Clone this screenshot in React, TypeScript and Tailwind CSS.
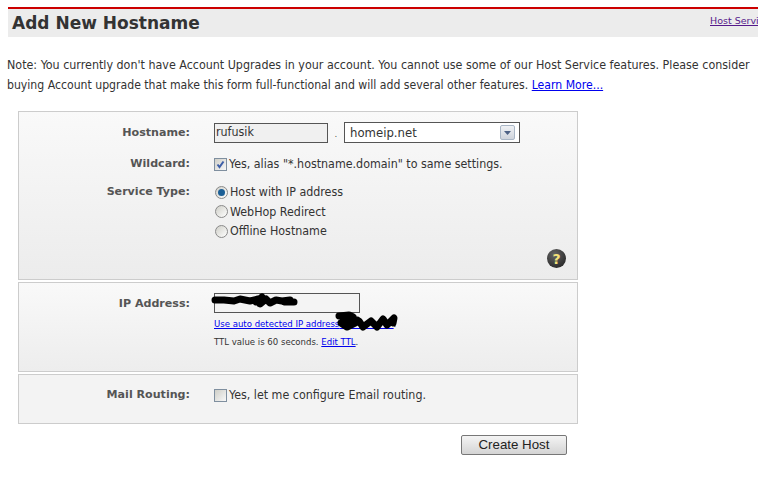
import React from 'react';

const FONT = "font-['DejaVu_Sans_Condensed','DejaVu_Sans',sans-serif]";

function Label({ children }: { children: React.ReactNode }) {
  return <div className="w-[171px] shrink-0 text-right font-['DejaVu_Sans',sans-serif] text-[11.1px] font-bold leading-[16px] text-[#555555]">{children}</div>;
}

function Radio({ checked }: { checked?: boolean }) {
  return (
    <span className="mr-[2px] flex h-[13px] w-[13px] shrink-0 items-center justify-center rounded-full border border-[#8a8a8a] bg-gradient-to-br from-[#cfcfc8] to-[#ffffff]">
      {checked && <span className="h-[7px] w-[7px] rounded-full bg-[#1c5f96]" />}
    </span>
  );
}

function Check({ checked }: { checked?: boolean }) {
  return (
    <span className="mr-[2px] flex h-[13px] w-[13px] shrink-0 items-center justify-center border border-[#7f8f9f] bg-gradient-to-br from-[#cfcfc8] to-[#f8f8f8]">
      {checked && (
        <svg width="9" height="9" viewBox="0 0 9 9">
          <path d="M1.5 4.5 L3.5 7 L7.5 1.5" fill="none" stroke="#3d5fa8" strokeWidth="2" />
        </svg>
      )}
    </span>
  );
}

function Scribble({ d, width, height, stroke, className }: { d: string; width: number; height: number; stroke: number; className: string }) {
  return (
    <svg width={width} height={height} viewBox={`0 0 ${width} ${height}`} className={className}>
      <path d={d} fill="none" stroke="#000000" strokeWidth={stroke} strokeLinecap="round" strokeLinejoin="round" />
    </svg>
  );
}

export default function App() {
  return (
    <div className={`${FONT} h-[477px] w-[758px] overflow-hidden bg-white pt-[7px] text-[12.35px] text-[#333333]`}>
      {/* Title bar */}
      <div className="ml-[8px] flex h-[30px] items-center justify-between overflow-hidden border-t-2 border-[#cc0000] bg-[#ececec] pl-[4px]">
        <h1 className="font-['DejaVu_Sans',sans-serif] text-[17px] font-bold leading-[28px] text-[#333333]">Add New Hostname</h1>
        <a href="#" className="mb-[3px] w-[48px] shrink-0 overflow-hidden whitespace-nowrap font-['DejaVu_Sans',sans-serif] text-[9.5px] text-[#551a8b] underline">Host Services</a>
      </div>

      {/* Note */}
      <p className="mt-[18px] ml-[7px] w-[751px] leading-[20px] text-[#333333]">
        <span className="block whitespace-nowrap text-[12.39px]">Note: You currently don't have Account Upgrades in your account. You cannot use some of our Host Service features. Please consider</span>
        <span className="block whitespace-nowrap text-[12.15px]">buying Account upgrade that make this form full-functional and will add several other features. <a href="#" className="text-[#0000ee] underline">Learn More...</a></span>
      </p>

      {/* Panels */}
      <div className="mt-[16px] ml-[18px] flex w-[560px] flex-col gap-[2px]">
        <div className="h-[169px] border border-[#cccccc] bg-gradient-to-b from-[#f9f9f9] to-[#ececec] pt-[10px]">
          <div className="flex items-center">
            <Label>Hostname:</Label>
            <div className="ml-[24px] flex items-center">
              <div className="flex h-[20px] w-[114px] items-center border border-[#555555] bg-[#f0f0f0] px-[1px]">rufusik</div>
              <span className="mx-[6px] mt-[4px] w-[4px] text-center text-[8px]">.</span>
              <div className="flex h-[21px] w-[176px] items-center justify-between border border-[#555555] bg-white pr-[4px] pl-[5px] text-[13px]">
                homeip.net
                <span className="flex h-[15px] w-[15px] items-center justify-center rounded-[2px] border border-[#a9b6c6] bg-gradient-to-b from-[#f0f2f5] to-[#cfd4dc]">
                  <svg width="7" height="4" viewBox="0 0 7 4"><path d="M0 0H7L3.5 4Z" fill="#4d6185" /></svg>
                </span>
              </div>
            </div>
          </div>
          <div className="mt-[13px] flex items-center">
            <Label>Wildcard:</Label>
            <div className="ml-[24px] flex items-center leading-[16px]"><Check checked />Yes, alias "*.hostname.domain" to same settings.</div>
          </div>
          <div className="mt-[12px] flex items-start">
            <Label>Service Type:</Label>
            <div className="ml-[25px] flex flex-col gap-[3.5px] leading-[16px]">
              <div className="flex items-center"><Radio checked />Host with IP address</div>
              <div className="flex items-center"><Radio />WebHop Redirect</div>
              <div className="flex items-center"><Radio />Offline Hostname</div>
            </div>
          </div>
          <div className="mt-[10px] mr-[11px] flex justify-end">
            <span className="flex h-[19px] w-[19px] items-center justify-center rounded-full bg-[radial-gradient(circle_at_40%_30%,#666666,#1a1a1a)] font-['DejaVu_Sans',sans-serif] text-[14px] font-bold leading-none text-[#f4e27a]">?</span>
          </div>
        </div>

        <div className="h-[90px] border border-[#cccccc] bg-gradient-to-b from-[#f9f9f9] to-[#ededed] pt-[10px]">
          <div className="flex items-start">
            <div className="mt-[3px]"><Label>IP Address:</Label></div>
            <div className="relative ml-[24px]">
              <div className="h-[20px] w-[146px] border border-[#555555] bg-[#f4f4f4]" />
              <div className="mt-[3px] text-[9.5px] leading-[16px]">
                <a href="#" className="text-[#0000ee] underline">Use auto detected IP address{'\u00A0'.repeat(20)}</a>.
              </div>
              <div className="mt-[2px] text-[9.5px] leading-[16px] text-[#333333]">
                TTL value is 60 seconds. <a href="#" className="text-[#0000ee] underline">Edit TTL</a>.
              </div>
              <Scribble width={90} height={18} stroke={7} className="absolute top-[-1px] left-[-4px]" d="M5 8 L14 8 L24 9 L30 7 L40 9 L48 7 L46 10 L52 5 L50 12 L56 7 L60 11 L66 8 L72 9 L80 8 L74 10 L84 10" />
              <Scribble width={68} height={24} stroke={7} className="absolute top-[17px] left-[119px]" d="M6 6 L16 5 L20 7 L10 9 L24 10 L8 13 L14 17 L26 11 L30 17 L38 11 L44 17 L50 9 L54 15 L61 8 L60 13" />
            </div>
          </div>
        </div>

        <div className="h-[50px] border border-[#cccccc] bg-[#f3f3f3] pt-[12px]">
          <div className="flex items-center">
            <Label>Mail Routing:</Label>
            <div className="ml-[24px] flex items-center leading-[16px]"><Check />Yes, let me configure Email routing.</div>
          </div>
        </div>
      </div>

      {/* Submit */}
      <div className="mt-[11px] ml-[461px]">
        <button className="h-[20px] w-[106px] rounded-[2px] border border-[#777777] bg-gradient-to-b from-[#f4f4f4] to-[#d4d4d4] font-['Liberation_Sans',sans-serif] text-[13.3px] leading-none text-[#222222]">Create Host</button>
      </div>
    </div>
  );
}
